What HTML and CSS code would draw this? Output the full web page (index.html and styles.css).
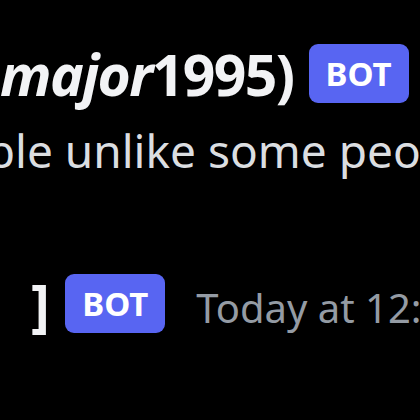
FILE: index.html
```html
<!DOCTYPE html>
<html lang="en">
<head>
    <meta charset="UTF-8">
    <title>Chat</title>
    <link rel="stylesheet" href="styles.css">
</head>
<body>
    <div class="chat">
        <div class="head head-first">
            <span class="name"><i>major</i>1995)</span>
            <span class="badge">BOT</span>
        </div>
        <div class="message">able unlike some people</div>

        <div class="head head-second">
            <span class="name bracket">]</span>
            <span class="badge">BOT</span>
            <span class="time">Today at 12:41 PM</span>
        </div>
    </div>
</body>
</html>
```

FILE: styles.css
```css
body {
    margin: 0;
    background-color: #000000;
    font-family: "Noto Sans", "Open Sans", sans-serif;
    overflow: hidden;
}

.chat {
    width: 420px;
    height: 420px;
    overflow: hidden;
}

/* Author line */
.head {
    display: flex;
    align-items: center;
    height: 59px;
    white-space: nowrap;
}

.head-first {
    margin-top: 44px;
    padding-left: 0;
}

.head-second {
    margin-top: 96px;
    padding-left: 31px;
}

.name {
    flex-shrink: 0;
    color: #f2f3f5;
    font-weight: 700;
    font-size: 57px;
    letter-spacing: -1.6px;
}

.name i {
    font-style: italic;
}

.badge {
    flex-shrink: 0;
    display: inline-flex;
    align-items: center;
    justify-content: center;
    width: 100px;
    height: 59px;
    margin-left: 15px;
    background: #5865f2;
    color: #ffffff;
    border-radius: 9px;
    font-size: 33px;
    font-weight: 700;
}

.bracket + .badge {
    margin-left: 17px;
}

.time {
    flex-shrink: 0;
    margin-left: 31px;
    color: #949ba4;
    font-size: 40px;
    padding-top: 8px;
}

/* Message body */
.message {
    margin-top: 19px;
    margin-left: -39px;
    color: #dbdee1;
    font-size: 46px;
    line-height: 56px;
    white-space: nowrap;
}
```
